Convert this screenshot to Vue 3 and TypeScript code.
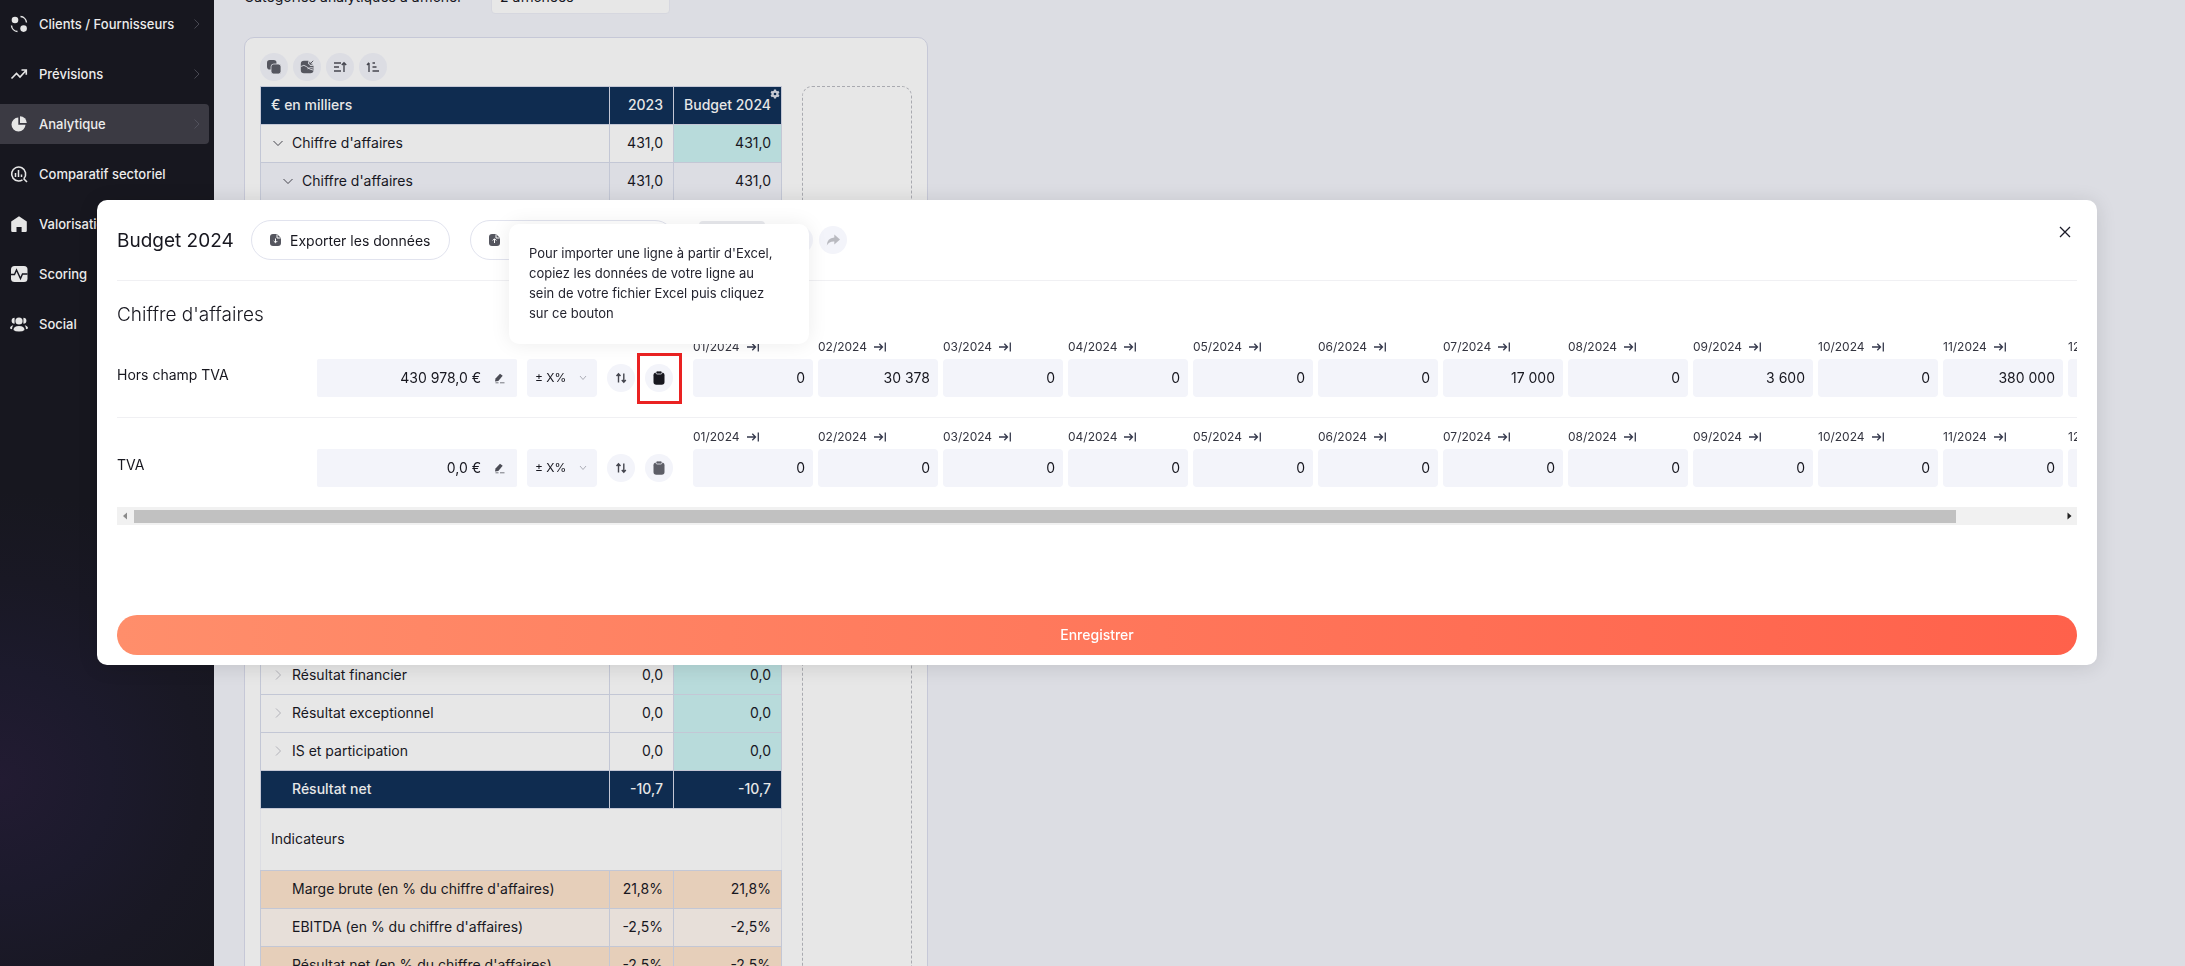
<script setup lang="ts">
import { ref } from 'vue'

interface NavItem { label: string; icon: string; arrow: boolean; active?: boolean }
interface TableRow { label: string; a: string; b: string; kind: string; chevron?: 'down' | 'right'; level?: number }
interface BudgetLine { id: string; label: string; total: string; months: string[]; highlighted: boolean }

const nav: NavItem[] = [
  { label: 'Clients / Fournisseurs', icon: 'clients', arrow: true },
  { label: 'Prévisions', icon: 'trend', arrow: true },
  { label: 'Analytique', icon: 'pie', arrow: true, active: true },
  { label: 'Comparatif sectoriel', icon: 'search', arrow: false },
  { label: 'Valorisation', icon: 'home', arrow: false },
  { label: 'Scoring', icon: 'pulse', arrow: false },
  { label: 'Social', icon: 'people', arrow: false },
]

const topRows: TableRow[] = [
  { label: "Chiffre d'affaires", a: '431,0', b: '431,0', kind: 'main-row', chevron: 'down' },
  { label: "Chiffre d'affaires", a: '431,0', b: '431,0', kind: 'sub-row', chevron: 'down', level: 1 },
]
const resultRows: TableRow[] = [
  { label: 'Résultat financier', a: '0,0', b: '0,0', kind: 'main-row', chevron: 'right' },
  { label: 'Résultat exceptionnel', a: '0,0', b: '0,0', kind: 'main-row', chevron: 'right' },
  { label: 'IS et participation', a: '0,0', b: '0,0', kind: 'main-row', chevron: 'right' },
  { label: 'Résultat net', a: '-10,7', b: '-10,7', kind: 'net-row' },
]
const ratioRows: TableRow[] = [
  { label: "Marge brute (en % du chiffre d'affaires)", a: '21,8%', b: '21,8%', kind: 'peach-row' },
  { label: "EBITDA (en % du chiffre d'affaires)", a: '-2,5%', b: '-2,5%', kind: 'pale-row' },
  { label: "Résultat net (en % du chiffre d'affaires)", a: '-2,5%', b: '-2,5%', kind: 'peach-row' },
]

const months = Array.from({ length: 12 }, (_, i) => `${String(i + 1).padStart(2, '0')}/2024`)

const lines = ref<BudgetLine[]>([
  {
    id: 'hors-champ', label: 'Hors champ TVA', total: '430 978,0 €', highlighted: true,
    months: ['0', '30 378', '0', '0', '0', '0', '17 000', '0', '3 600', '0', '380 000', '0'],
  },
  { id: 'tva', label: 'TVA', total: '0,0 €', highlighted: false, months: Array(12).fill('0') },
])
</script>

<template>
  <div class="page">
    <nav class="sidebar">
      <a v-for="item in nav" :key="item.label" href="#" class="nav-item" :class="{ active: item.active }">
        <svg class="nav-icon" viewBox="0 0 18 18" fill="#e6e6e6">
          <template v-if="item.icon === 'clients'">
            <circle cx="5" cy="5" r="3.3" /><circle cx="13.6" cy="13.6" r="3.3" />
            <path d="M10.500 1.500a6.500 6.500 0 0 1 6 6M1.500 10.500a6.500 6.500 0 0 0 6 6" fill="none" stroke="#e6e6e6" stroke-width="1.4" />
          </template>
          <path v-else-if="item.icon === 'trend'" d="M1.500 13.500l5-5 3.500 3.500 6-6.500M11.500 5h4.800v4.800" fill="none" stroke="#e6e6e6" stroke-width="1.6" />
          <template v-else-if="item.icon === 'pie'">
            <path d="M8.300 2.500v7.200h7.200A7 7 0 1 1 8.300 2.500z" /><path d="M10 1.200a6.800 6.800 0 0 1 6.800 6.800H10z" />
          </template>
          <template v-else-if="item.icon === 'search'">
            <path d="M14 13.500a7 7 0 1 0-5.500 2.500 7 7 0 0 0 4-1.200M13.500 13.500l3.500 3.500" fill="none" stroke="#e6e6e6" stroke-width="1.6" />
            <path d="M5.500 8v4M8.500 5v7M11.500 9.500v2.500" stroke="#e6e6e6" stroke-width="1.500" />
          </template>
          <path v-else-if="item.icon === 'home'" d="M9 1.200l7.800 5.200v9.400q0 1.200-1.200 1.200h-4v-5H6.500v5h-4q-1.300 0-1.300-1.200V6.400z" />
          <template v-else-if="item.icon === 'pulse'">
            <rect x="1" y="1" width="16.500" height="16" rx="3.500" />
            <path d="M1 9.500h3.500L6.500 5l4 8.500 2-4.500h5" fill="none" stroke="#16161f" stroke-width="1.400" />
          </template>
          <template v-else>
            <circle cx="9" cy="6" r="3.600" /><path d="M3.500 15q0-4 5.500-4t5.500 4q-1.500 1.500-5.500 1.500T3.500 15z" />
            <path d="M4.600 2.800a3 3 0 0 0 0 6zM13.400 2.800a3 3 0 0 1 0 6zM3.300 10.300Q0 11 0 13.500l2 .8q0-2.500 1.300-4zM14.700 10.300q3.300.7 3.300 3.200l-2 .8q0-2.500-1.300-4z" />
          </template>
        </svg>
        <span>{{ item.label }}</span>
        <svg v-if="item.arrow" class="nav-arrow" viewBox="0 0 6 10"><path d="M.5.5L5 5 .5 9.500" fill="none" stroke="#5c5c67" stroke-width=".7" /></svg>
      </a>
    </nav>

    <main class="main">
      <div class="filter">
        <label for="categories">Catégories analytiques à afficher</label>
        <select id="categories"><option>2 affichées</option></select>
      </div>
      <section class="card">
        <div class="tools">
          <button class="round" aria-label="Copier">
            <svg viewBox="0 0 14 14" fill="#55565f"><rect x="0" y="0" width="9.500" height="9.500" rx="2.800" /><rect x="4" y="4" width="10" height="10" rx="2.800" stroke="#dcdde3" stroke-width=".8" /></svg>
          </button>
          <button class="round" aria-label="Image">
            <svg viewBox="0 0 14 14"><path d="M4 .8h4.500L8 3.500l2.500 2.500 3-.3V10q0 3.200-3.200 3.200H4Q.8 13.200.8 10V4Q.8.8 4 .8z" fill="#55565f" /><path d="M.8 6.500q3.200-2.500 6 .3t6.700 3.400M7.500 8.800q3-2 6-.8" fill="none" stroke="#dcdde3" stroke-width=".9" /><path d="M13.200.8L10 4M9.800 1.800V4.200h2.600" fill="none" stroke="#55565f" /></svg>
          </button>
          <button class="round" aria-label="Trier">
            <svg viewBox="0 0 14 14" fill="none" stroke="#45464f" stroke-width="1.400"><path d="M1 3h7M1 7h5M1 11h7M11 12V3M8.800 5L11 2.700 13.200 5" /></svg>
          </button>
          <button class="round" aria-label="Ordonner">
            <svg viewBox="0 0 14 14" fill="none" stroke="#45464f" stroke-width="1.400"><path d="M3 12V3M1 5l2-2.300M6.500 3h2.500M6.500 7h4M6.500 11h6.500" /></svg>
          </button>
        </div>
        <div class="board">
          <table class="table">
            <thead>
              <tr>
                <th scope="col" class="c-label">€ en milliers</th>
                <th scope="col" class="num c-year">2023</th>
                <th scope="col" class="num c-budget">
                  Budget 2024
                  <button class="gear" aria-label="Paramètres">
                    <svg viewBox="0 0 10 10"><path d="M5 .5v9M1.100 2.700l7.800 4.600M1.100 7.300l7.800-4.600" stroke="#c7cad3" stroke-width="2.200" /><circle cx="5" cy="5" r="3.500" fill="#c7cad3" /><circle cx="5" cy="5" r="1.300" fill="#0f2c50" /></svg>
                  </button>
                </th>
              </tr>
            </thead>
            <tbody>
              <tr v-for="(r, i) in topRows" :key="i" :class="r.kind">
                <td>
                  <div class="cell" :class="{ nested: r.level }">
                    <svg class="chev" viewBox="0 0 10 10"><path d="M.5 3L5 7.500 9.500 3" fill="none" stroke="#33343c" stroke-width=".9" /></svg>
                    {{ r.label }}
                  </div>
                </td>
                <td class="num">{{ r.a }}</td>
                <td class="num budget">{{ r.b }}</td>
              </tr>
              <tr class="gap-row"><td></td><td></td><td></td></tr>
              <tr v-for="r in resultRows" :key="r.label" :class="r.kind">
                <td>
                  <div class="cell">
                    <svg class="chev" viewBox="0 0 10 10"><path v-if="r.chevron" d="M3 .5L7.500 5 3 9.500" fill="none" stroke="#a4a5ad" stroke-width=".8" /></svg>
                    {{ r.label }}
                  </div>
                </td>
                <td class="num">{{ r.a }}</td>
                <td class="num budget">{{ r.b }}</td>
              </tr>
              <tr class="heading-row"><td colspan="3">Indicateurs</td></tr>
              <tr v-for="r in ratioRows" :key="r.label" :class="r.kind">
                <td><div class="cell"><span class="chev"></span>{{ r.label }}</div></td>
                <td class="num">{{ r.a }}</td>
                <td class="num">{{ r.b }}</td>
              </tr>
            </tbody>
          </table>
          <div class="dropzone"></div>
        </div>
      </section>
    </main>

    <div class="overlay">
      <section class="modal" role="dialog" aria-labelledby="modal-title">
        <header class="modal-head">
          <h1 id="modal-title">Budget 2024</h1>
          <button class="pill export">
            <svg viewBox="0 0 11 12"><path d="M3 0h4l4 4v5q0 3-3 3H3Q0 12 0 9V3q0-3 3-3z" fill="#55565f" /><path d="M7 .3V4h3.700M5.500 4.500v4M3.700 7l1.800 1.800L7.300 7" fill="none" stroke="#fff" /></svg>
            Exporter les données
          </button>
          <button class="pill import" aria-label="Importer les données">
            <svg viewBox="0 0 11 12"><path d="M3 0h4l4 4v5q0 3-3 3H3Q0 12 0 9V3q0-3 3-3z" fill="#55565f" /><path d="M7 .3V4h3.700M5.500 9V5M3.700 6.500l1.800-1.800 1.800 1.800" fill="none" stroke="#fff" /></svg>
          </button>
          <div class="swatch"></div>
          <div class="history">
            <button class="round" aria-label="Annuler"></button>
            <button class="round" aria-label="Rétablir">
              <svg viewBox="0 0 14 14" fill="#b9bac0"><path d="M8.300 1.500L14 6.500l-5.700 5V8.600Q3.200 8.300.8 12.500 1 5 8.300 4.500z" /></svg>
            </button>
          </div>
          <button class="close" aria-label="Fermer">
            <svg viewBox="0 0 12 12"><path d="M1 1l10 10M11 1L1 11" stroke="#1b1b28" stroke-width="1.300" /></svg>
          </button>
        </header>

        <h2>Chiffre d'affaires</h2>
        <div class="lines">
          <div v-for="line in lines" :key="line.id" class="line">
            <label class="line-label" :for="line.id">{{ line.label }}</label>
            <div class="amount">
              <input :id="line.id" v-model="line.total" type="text" />
              <svg viewBox="0 0 11 11"><path d="M1 8.500l.5-3L6 .8l2.700 2-4.400 5.300z" fill="#4b4c55" /><path d="M1.500 9.800h3M6 9.800h4.500" stroke="#77787f" /></svg>
            </div>
            <div class="mode">
              <select :aria-label="`Variation ${line.label}`"><option>± X%</option></select>
              <svg viewBox="0 0 8 6"><path d="M1 1l3 3.500L7 1" fill="none" stroke="#9a9ba5" stroke-width=".8" /></svg>
            </div>
            <button class="round light" aria-label="Répartir">
              <svg viewBox="0 0 14 14" fill="none" stroke="#45464f" stroke-width="1.400"><path d="M4.500 11.500V3M2.500 5l2-2.300L6.500 5M9.800 2.500v8.500M7.800 9l2 2.300 2-2.300" /></svg>
            </button>
            <div class="paste" :class="{ highlighted: line.highlighted }">
              <button class="round light" aria-label="Coller la ligne">
                <svg viewBox="0 0 14 14"><rect x="1.500" y="1.500" width="11" height="12.300" rx="2.800" fill="currentColor" /><rect x="4" y="0" width="6" height="3" rx="1.200" fill="currentColor" stroke="#f3f4fa" stroke-width=".8" /></svg>
              </button>
            </div>
            <div class="months">
              <div v-for="(m, i) in months" :key="m" class="month">
                <div class="month-head">
                  <label :for="`${line.id}-${i}`">{{ m }}</label>
                  <button aria-label="Étendre">
                    <svg viewBox="0 0 12 10" fill="none" stroke="#35394c" stroke-width="1.300"><path d="M0 5h8.500M5.300 1.800L8.500 5 5.300 8.200M11.300.5v9" /></svg>
                  </button>
                </div>
                <input :id="`${line.id}-${i}`" v-model="line.months[i]" type="text" />
              </div>
            </div>
          </div>
        </div>
        <div class="scrollbar">
          <svg viewBox="0 0 17 18"><path d="M10 5.500v7L6 9z" fill="#8b8b8b" /></svg>
          <div class="track"><div class="thumb"></div></div>
          <svg viewBox="0 0 17 18"><path d="M7.500 5.500v7l4-3.500z" fill="#222" /></svg>
        </div>
        <button class="save">Enregistrer</button>
        <div class="tooltip" role="tooltip">
          Pour importer une ligne à partir d'Excel,<br />copiez les données de votre ligne au<br />sein de votre fichier Excel puis cliquez<br />sur ce bouton
        </div>
      </section>
    </div>
  </div>
</template>

<style>
body { margin: 0; background: #dcdde3; }
</style>

<style scoped>
.page, .page * { box-sizing: border-box; }
.page {
  display: flex; height: 100vh; overflow: hidden; background: #dcdde3; color: #17171f;
  font-family: Inter, "Open Sans", sans-serif; font-size: 14px;
}
button, input, select { font: inherit; color: inherit; border: 0; margin: 0; padding: 0; background: none; }
button { cursor: pointer; }
select { appearance: none; }
svg { display: block; flex: none; }

.sidebar {
  flex: none; width: 214px; padding: 4px 5px 0 0; display: flex; flex-direction: column; gap: 10px;
  background: radial-gradient(circle at 0 780px, #221b32 0, #1c1a2c 110px, #191824 200px, #17171f 290px);
}
.nav-item {
  height: 40px; flex: none; display: flex; align-items: center; gap: 11px; padding: 0 9px 0 10px;
  color: #ececec; font-size: 13px; font-weight: 500; text-decoration: none; border-radius: 0 4px 4px 0;
}
.nav-item.active { background: #3b3a43; }
.nav-icon { width: 18px; height: 18px; }
.nav-arrow { width: 6px; height: 10px; margin-left: auto; }

.main { flex: 1; min-width: 0; padding-left: 30px; overflow: hidden; }
.filter { display: flex; align-items: center; gap: 12px; margin-top: -22px; height: 36px; }
.filter label { width: 235px; white-space: nowrap; }
.filter select { width: 179px; height: 36px; padding: 0 8px; background: #e7e7e7; border: 1px solid #d6d7df; border-radius: 4px; }
.card {
  width: 684px; margin-top: 23px; padding: 15px;
  background: #e7e7e7; border: 1px solid #c6c8d7; border-radius: 10px;
}
.tools { display: flex; gap: 5px; }
.round { width: 28px; height: 28px; border-radius: 50%; background: #dcdde3; display: flex; align-items: center; justify-content: center; }
.round svg { width: 14px; height: 14px; }
.round.light { background: #f3f4fa; flex: none; }
.board { display: flex; gap: 20px; margin-top: 5px; }
.table { width: 522px; flex: none; border-collapse: collapse; table-layout: fixed; line-height: 20px; }
.table th, .table td { height: 38px; padding: 0 10px 2px; border: 1px solid #c3c7d5; text-align: left; font-weight: 400; white-space: nowrap; }
.table th { position: relative; background: #0f2c50; color: #e7e7e7; font-weight: 500; }
.c-year { width: 64px; }
.c-budget { width: 108px; }
.table .num { text-align: right; }
.table th.num { padding-left: 0; }
.gear { position: absolute; top: 2px; right: 1px; }
.gear svg { width: 10px; height: 10px; }
.cell { display: flex; align-items: center; gap: 9px; padding-left: 2px; }
.cell.nested { padding-left: 12px; }
.chev { width: 10px; height: 10px; flex: none; }
.table .main-row .budget { background: #b8dbdb; }
.table .sub-row td { background: #dcdde3; }
.table .net-row td { background: #0f2c50; color: #e7e7e7; font-weight: 500; }
.table .peach-row td { background: #e6cfba; }
.table .pale-row td { background: #e7dfd9; }
.table .gap-row td { height: 456px; }
.table .heading-row td { height: 62px; border-left-color: #dcdde3; border-right-color: #dcdde3; }
.dropzone { flex: 1; border: 1px dashed #a9aab0; border-radius: 10px; }

.overlay { position: fixed; inset: 0; padding: 200px 88px 0 97px; }
.modal { position: relative; padding: 0 20px 10px; background: #fff; border-radius: 10px; box-shadow: 0 2px 20px rgba(0, 0, 0, .12); }
.modal-head { display: flex; align-items: center; padding: 20px 0; border-bottom: 1px solid #f0f0f3; }
h1, h2 { margin: 0; font-size: 19px; font-weight: 400; }
h1 { width: 134px; white-space: nowrap; }
.pill {
  height: 40px; padding: 0 16px 0 18px; display: flex; align-items: center; gap: 9px; white-space: nowrap;
  border: 1px solid #e1e3ee; border-radius: 20px;
}
.pill svg { width: 11px; height: 12px; }
.pill.export { min-width: 199px; }
.pill.import { width: 205px; margin-left: 20px; }
.swatch { width: 66px; height: 38px; margin-left: 24px; border-radius: 4px; background: #e9eaee; }
.history { display: flex; gap: 6px; margin-left: 20px; }
.history .round { background: #f3f4fa; }
.close { margin: 0 6px 16px auto; }
.close svg { width: 12px; height: 12px; }
h2 { padding-top: 20px; line-height: 27px; font-weight: 300; }

.lines { overflow: hidden; }
.line { display: flex; align-items: flex-end; height: 90px; padding-bottom: 20px; border-bottom: 1px solid #f0f0f3; }
.line:last-child { height: 89px; border-bottom: 0; }
.line-label { flex: none; width: 200px; line-height: 20px; padding-bottom: 12px; }
.amount { flex: none; display: flex; align-items: center; width: 200px; height: 38px; padding-right: 12px; background: #f3f4fa; border-radius: 2px; }
.amount input { flex: 1; min-width: 0; height: 38px; padding: 0 13px 2px 0; text-align: right; }
.amount svg { width: 11px; height: 11px; }
.mode { flex: none; position: relative; width: 70px; height: 38px; margin: 0 10px; }
.mode select { width: 100%; height: 100%; padding: 0 0 1px 8px; font-size: 12px; background: #f3f4fa; border-radius: 4px; }
.mode svg { position: absolute; right: 10px; top: 16px; width: 8px; height: 6px; }
.line > .round, .paste { margin-bottom: 5px; }
.paste { position: relative; flex: none; margin-left: 10px; margin-right: 20px; color: #5d5e67; }
.paste.highlighted { color: #17171f; }
.paste.highlighted::after { content: ""; position: absolute; inset: -11px -9px -12px -8px; border: 3px solid #ea2222; }
.months { display: flex; gap: 5px; }
.month { flex: none; width: 120px; }
.month-head { display: flex; align-items: center; gap: 7px; height: 22px; padding-bottom: 3px; font-size: 12px; color: #33343f; }
.month-head svg { width: 12px; height: 10px; }
.month input { width: 100%; height: 38px; padding: 0 8px 2px; text-align: right; background: #f3f4fa; border-radius: 4px; display: block; }

.scrollbar { display: flex; height: 18px; background: #f1f1f1; }
.scrollbar svg { width: 17px; height: 18px; }
.track { flex: 1; padding: 3px 0 2px; }
.thumb { width: 94.6%; height: 100%; background: #c1c1c1; }
.save {
  display: block; width: 100%; height: 40px; margin-top: 90px; padding-bottom: 1px; border-radius: 20px;
  background: linear-gradient(90deg, #ff8e6b, #ff614b); color: #fff; font-weight: 500;
}
.tooltip {
  position: absolute; left: 412px; top: 24px; width: 300px; height: 120px; padding: 19px 20px; background: #fff; border-radius: 10px;
  box-shadow: 0 0 20px rgba(0, 0, 0, .08); font-size: 13px; line-height: 20px; color: #23232e; white-space: nowrap;
}
</style>
